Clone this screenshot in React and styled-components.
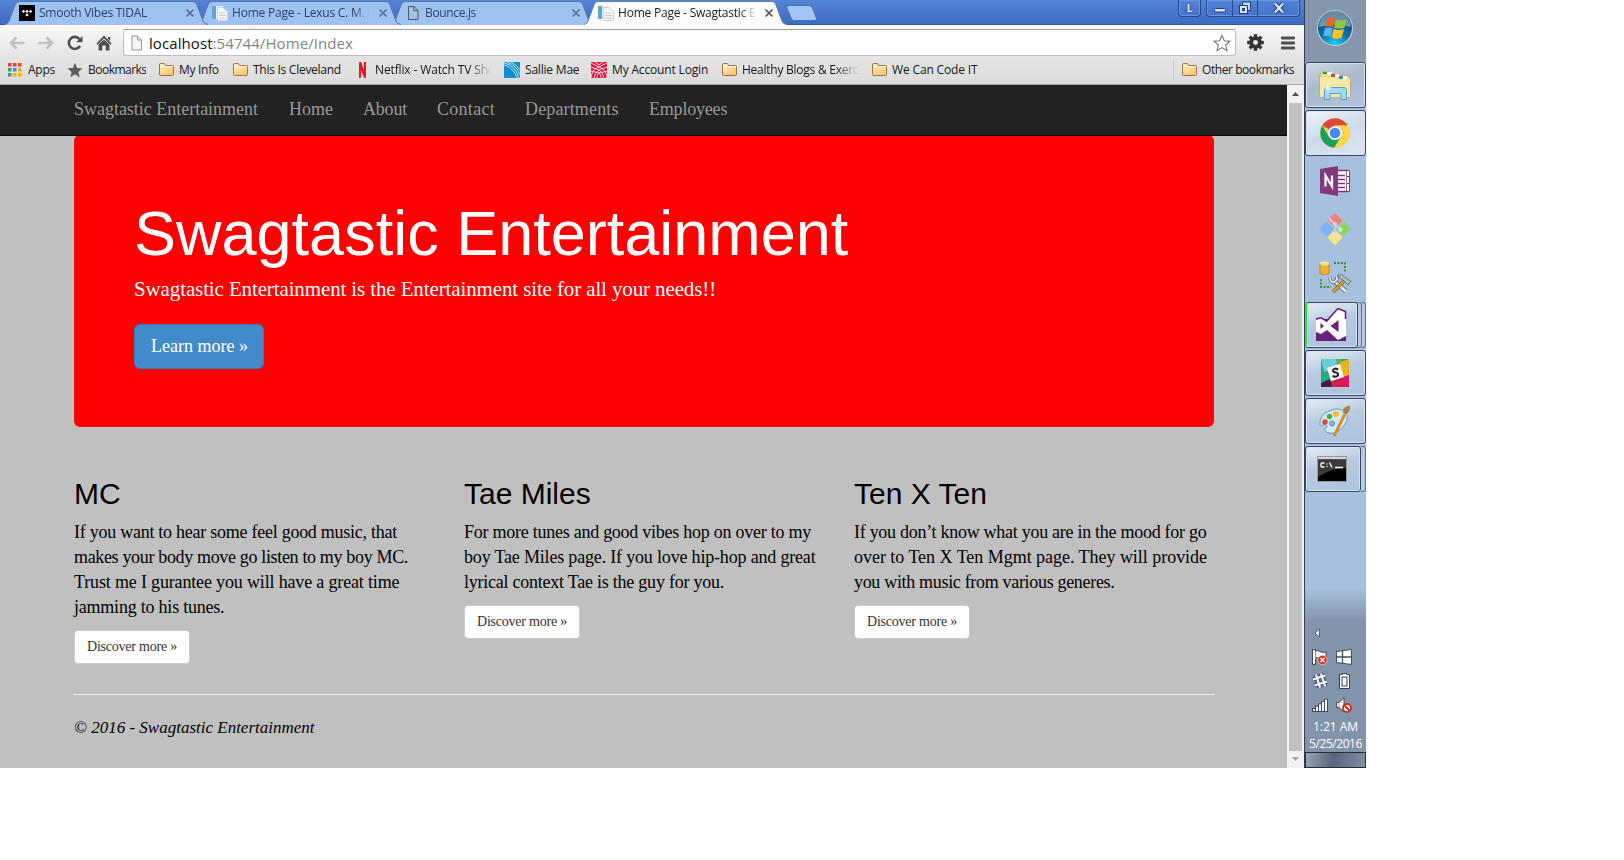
import React from 'react';
import styled, { createGlobalStyle, css } from 'styled-components';

const Global = createGlobalStyle`
  * { box-sizing: border-box; }
  body { margin: 0; background: #fff; }
  svg { display: block; }
`;

const ui = css`font-family: 'Open Sans', 'Noto Sans', sans-serif;`;
const serif = css`font-family: 'Liberation Serif', serif;`;

const Desktop = styled.div`
  display: flex;
  width: 1366px;
  height: 768px;
  overflow: hidden;
`;

const Browser = styled.div`
  display: flex;
  flex-direction: column;
  width: 1304px;
  height: 768px;
`;

/* ---------- tab strip ---------- */
const TabStrip = styled.div`
  display: flex;
  height: 25px;
  padding-left: 5px;
  background: linear-gradient(#5384d5, #3e6bc4);
  border-bottom: 1px solid #35589f;
  overflow: visible;
`;

const Tab = styled.div`
  position: relative;
  display: flex;
  align-items: center;
  flex: none;
  width: 203px;
  height: ${p => (p.$active ? 25 : 24)}px;
  margin-right: -10px;
  padding: ${p => (p.$active ? 1 : 2)}px 0 0 14px;
  z-index: ${p => (p.$active ? 5 : 4 - p.$order)};
`;

const TabShape = styled.svg`
  position: absolute;
  left: 0;
  top: 0;
  z-index: -1;
`;

const TabIcon = styled.span`
  flex: none;
  width: 16px;
  height: 16px;
  margin-right: 4px;
`;

const TabTitle = styled.span`
  ${ui}
  flex: none;
  width: 139px;
  font-size: 12px;
  line-height: 16px;
  white-space: nowrap;
  overflow: hidden;
  letter-spacing: ${p => p.$track}px;
  color: ${p => (p.$active ? '#1c1c1c' : '#2d4264')};
  mask-image: linear-gradient(90deg, #000 122px, transparent 138px);
`;

const TabClose = styled.svg`
  flex: none;
  margin-left: 7px;
`;

const NewTab = styled.svg`
  margin: 5px 0 0 8px;
`;

const WindowControls = styled.div`
  display: flex;
  gap: 5px;
  margin-left: auto;
  padding-right: 4px;
  height: 17px;
`;

const ControlGroup = styled.div`
  display: flex;
  height: 17px;
  border: 1px solid #27468c;
  border-top: 0;
  border-radius: 0 0 4px 4px;
  box-shadow: inset 0 0 0 1px #6b97e2;
`;

const Control = styled.div`
  ${ui}
  display: flex;
  align-items: center;
  justify-content: center;
  width: ${p => p.$w}px;
  font-size: 10px;
  font-weight: 700;
  color: #e8eef9;
  text-shadow: 0 0 2px #14295e;
  & + & { border-left: 1px solid #27468c; }
`;

/* ---------- toolbar + bookmarks ---------- */
const Chrome = styled.div`
  height: 60px;
  background: linear-gradient(#fafafa, #e4e4e4 32px, #dcdcdc);
  border-bottom: 1px solid #a5a5a5;
`;

const Toolbar = styled.div`
  display: flex;
  align-items: center;
  height: 31px;
  padding: 4px 9px 0 8px;
`;

const NavButton = styled.span`
  flex: none;
  width: 18px;
  height: 18px;
  margin-right: ${p => p.$gap}px;
`;

const Omnibox = styled.div`
  display: flex;
  align-items: center;
  width: 1115px;
  height: 27px;
  padding: 0 4px 0 6px;
  background: #fff;
  border: 1px solid #bdbdbd;
  border-top-color: #9f9f9f;
  border-radius: 3px;
`;

const Url = styled.span`
  ${ui}
  flex: 1;
  margin-left: 6px;
  font-size: 15px;
  letter-spacing: 0.08px;
  color: #848484;
  b { font-weight: 400; color: #111; }
`;

const ToolIcon = styled.svg`
  flex: none;
  margin-left: ${p => p.$ml}px;
`;

const BookmarkBar = styled.div`
  display: flex;
  align-items: center;
  gap: 12px;
  height: 27px;
  padding: 0 6px 0 7px;
`;

const Bookmark = styled.div`
  display: flex;
  align-items: center;
  flex: none;
  gap: 5px;
`;

const BookmarkLabel = styled.span`
  ${ui}
  width: ${p => p.$w}px;
  font-size: 12px;
  line-height: 18px;
  letter-spacing: ${p => p.$track}px;
  white-space: nowrap;
  overflow: hidden;
  color: #161616;
  ${p => p.$fade && css`mask-image: linear-gradient(90deg, #000 80%, transparent);`}
`;

const BarDivider = styled.span`
  width: 1px;
  height: 20px;
  margin: 0 -5px 0 auto;
  background: #c2cbd2;
`;

/* ---------- web page ---------- */
const Viewport = styled.div`
  display: flex;
  flex: 1;
  min-height: 0;
`;

const Page = styled.div`
  ${serif}
  width: 1287px;
  background: #c0c0c0;
  color: #000;
`;

const Navbar = styled.nav`
  display: flex;
  gap: 30px;
  height: 51px;
  padding: 14px 74px 0;
  background: #222;
  border-bottom: 1px solid #080808;
`;

const NavLink = styled.a`
  width: ${p => p.$w}px;
  font-size: 18px;
  line-height: 20px;
  letter-spacing: ${p => p.$track}px;
  white-space: nowrap;
  color: #999;
`;

const Container = styled.main`
  width: 1140px;
  margin: 0 auto 0 74px;
`;

const Jumbotron = styled.section`
  height: 292px;
  margin-top: -1px;
  padding: 67px 60px 0;
  background: #f00;
  border-radius: 6px;
  color: #fff;
  clip-path: inset(1px 0 0 0);
`;

const HeroTitle = styled.h1`
  margin: 0;
  font: 400 63px/63px 'Liberation Sans', Arial, sans-serif;
`;

const Lead = styled.p`
  margin: 8px 0 19px;
  font-size: 21px;
  line-height: 32px;
  letter-spacing: -0.123px;
`;

const Button = styled.a`
  display: inline-block;
  white-space: nowrap;
  ${p => p.$primary ? css`
    width: 130px;
    height: 45px;
    padding: 10px 16px;
    font-size: 18px;
    line-height: 23px;
    color: #fff;
    background: #428bca;
    border: 1px solid #357ebd;
    border-radius: 6px;
  ` : css`
    width: 116px;
    height: 34px;
    padding: 6px 12px;
    font-size: 14px;
    line-height: 19px;
    letter-spacing: -0.22px;
    color: #333;
    background: #fff;
    border: 1px solid #ccc;
    border-radius: 4px;
  `}
`;

const Columns = styled.div`
  display: grid;
  grid-template-columns: repeat(3, 390px);
  height: 267px;
  padding-top: 50px;
`;

const ArtistName = styled.h2`
  margin: 0 0 10px;
  font: 400 30px/33px 'Liberation Sans', Arial, sans-serif;
`;

const Blurb = styled.p`
  margin: 0 0 10px;
  font-size: 18px;
  line-height: 25px;
`;

const Line = styled.span`
  display: block;
  letter-spacing: ${p => p.$track}px;
  white-space: nowrap;
`;

const Footer = styled.footer`
  padding-top: 22px;
  border-top: 1px solid #eee;
  font-size: 17px;
  line-height: 22px;
  font-style: italic;
`;

const Scrollbar = styled.div`
  display: flex;
  flex-direction: column;
  align-items: center;
  width: 17px;
  background: #f1f1f1;
`;

const ScrollArrow = styled.svg`
  flex: none;
`;

const Thumb = styled.div`
  flex: 1;
  width: 13px;
  background: #c1c1c1;
`;

/* ---------- windows taskbar ---------- */
const Taskbar = styled.aside`
  display: flex;
  flex-direction: column;
  width: 62px;
  border-left: 1px solid #333f4d;
  background: linear-gradient(#8596ab 0 62px, #a6c0dd 62px 588px, #8294aa 622px);
`;

const StartButton = styled.div`
  display: flex;
  justify-content: center;
  height: 62px;
  padding: 9px 2px 0 0;
`;

const AppSlot = styled.div`
  display: flex;
  height: 48px;
`;

const AppButton = styled.div`
  display: flex;
  flex: 1;
  align-items: center;
  justify-content: center;
  height: 46px;
  padding-right: 2px;
  border: 1px solid transparent;
  ${p => p.$open && css`
    border-color: #39485a;
    border-radius: 3px;
    box-shadow: inset 0 0 0 1px #d5e2f0;
    background: ${p.$active
      ? 'linear-gradient(160deg, #f1f5fa, #ccdaea 50%, #dce7f3)'
      : p.$dim
        ? 'linear-gradient(160deg, #d2d8e0, #a9bacd 45%, #afc3de)'
        : 'linear-gradient(165deg, #e6edf5, #b6cae0 45%, #abc3df)'};
  `}
  ${p => p.$alert && css`border-left: 2px solid #23e83c; padding-right: 3px;`}
`;

const StackEdge = styled.div`
  width: ${p => p.$w}px;
  height: 46px;
  border: 1px solid #5b6f87;
  border-left: 0;
  border-radius: 0 3px 3px 0;
  background: #b5c9e0;
`;

const Tray = styled.div`
  display: grid;
  grid-template-columns: 16px 16px;
  column-gap: 8px;
  row-gap: 8px;
  margin: auto 0 0 7px;
`;

const TrayArrow = styled.span`
  grid-column: 1 / -1;
  height: 16px;
`;

const Clock = styled.div`
  ${ui}
  height: 39px;
  padding-top: 5px;
  text-align: center;
  font-size: 12px;
  line-height: 17px;
  color: #fff;
  span { display: block; }
  span + span { letter-spacing: -0.45px; }
`;

const ShowDesktop = styled.div`
  height: 16px;
  border: 1px solid #26303c;
  background: linear-gradient(100deg, #9aa7b6, #56657a 45%, #8090a4);
`;

/* ---------- icons ---------- */
const PageIcon = ({ stroke = '#555', fill = 'none' }) => (
  <svg width="16" height="16" viewBox="0 0 16 16">
    <path d="M3.5 1.5H9L13 5.5V14.5H3.5Z" fill={fill} stroke={stroke} />
    <path d="M8.8 1.5V5.7H13" fill="none" stroke={stroke} />
  </svg>
);

const SiteIcon = () => (
  <svg width="16" height="16" viewBox="0 0 16 16">
    <rect x="0" y="1" width="11" height="13" fill="#e9eef2" />
    <rect x="0" y="1" width="4" height="13" fill="#5aa7d6" />
    <path d="M5.500 2.500H11L15.500 7V15.500H5.500Z" fill="#f4f5f6" stroke="#cfd4d8" />
    <path d="M7 8H13M7 10.500H14M7 13H14" stroke="#c7ccd0" />
  </svg>
);

const TidalIcon = () => (
  <svg width="16" height="16" viewBox="0 0 16 16">
    <rect width="16" height="16" fill="#000" />
    <path d="M4.500 4.700L6.200 6.400L4.500 8.100L2.800 6.400ZM8 4.700L9.700 6.400L8 8.100L6.300 6.400ZM11.500 4.700L13.200 6.400L11.500 8.100L9.800 6.400ZM8 8.200L9.700 9.900L8 11.600L6.300 9.900Z" fill="#fff" />
  </svg>
);

const AppsIcon = () => {
  const colors = ['#ea4335', '#ea4335', '#ea4335', '#34a05c', '#4285f4', '#f4b400', '#34a05c', '#f4b400', '#f4b400'];
  return (
    <svg width="16" height="16" viewBox="0 0 16 16">
      {colors.map((c, i) => <rect key={i} x={1 + (i % 3) * 5} y={1 + Math.floor(i / 3) * 5} width="3.500" height="3.500" fill={c} />)}
    </svg>
  );
};

const STAR = 'M8 .8L10.100 5.900L15.500 6.300L11.400 9.900L12.700 15.200L8 12.300L3.300 15.200L4.600 9.900L.5 6.300L5.900 5.900Z';

const StarIcon = () => (
  <svg width="16" height="16" viewBox="0 0 16 16"><path d={STAR} fill="#5c5c5c" /></svg>
);

const FolderIcon = () => (
  <svg width="16" height="16" viewBox="0 0 16 16">
    <defs><linearGradient id="folder" x2="0.6" y2="1"><stop stopColor="#fff0c8" /><stop offset="1" stopColor="#fcc873" /></linearGradient></defs>
    <path d="M1.500 12.500V3Q1.500 1.500 2.500 1.500H6.500L7.500 3.500H14.500Q15.500 3.500 15.500 4.500V12.500Q15.500 13.500 14.500 13.500H2.500Q1.500 13.500 1.500 12.500Z" fill="url(#folder)" stroke="#a5703a" />
    <path d="M2.500 4.500H14.500" stroke="#fff6dc" />
  </svg>
);

const NetflixIcon = () => (
  <svg width="16" height="16" viewBox="0 0 16 16">
    <path d="M5 0H7.200L9.800 8V0H12V16L9.800 15.400L7.200 8V15.400L5 16Z" fill="#e21b22" />
  </svg>
);

const SallieIcon = () => (
  <svg width="16" height="16" viewBox="0 0 16 16">
    <rect width="16" height="16" fill="#0b8fd0" />
    <path d="M0 3Q9 5 13 16M0 1Q11 3 15 16M3 0Q13 4 16 13M7 0Q13 3 16 8" fill="none" stroke="#e8f6fd" strokeWidth=".8" />
  </svg>
);

const AccountIcon = () => (
  <svg width="16" height="16" viewBox="0 0 16 16">
    <rect width="16" height="16" fill="#e0103a" />
    <path d="M0 16Q1 7 8 5Q15 7 16 16M3 16Q4 10 8 8Q12 10 13 16M6 16Q6 12 8 11Q10 12 10 16M0 1L8 5L16 1M0 5L8 8L16 5M4 0L8 3L12 0M0 9L8 11L16 9" fill="none" stroke="#fff" strokeWidth=".8" />
  </svg>
);

const ArrowIcon = ({ flip }) => (
  <svg width="18" height="18" viewBox="0 0 18 18">
    <path d="M16.500 9H3M8.500 3.500L3 9L8.500 14.500" transform={flip ? 'matrix(-1 0 0 1 18 0)' : undefined} fill="none" stroke="#c0c0c0" strokeWidth="2.600" />
  </svg>
);

const ReloadIcon = () => (
  <svg width="18" height="18" viewBox="0 0 18 18">
    <path d="M14 12A6 6 0 1 1 13.400 5" fill="none" stroke="#4d4d4d" strokeWidth="2.600" />
    <path d="M16.500 2V8.300H10.200Z" fill="#4d4d4d" />
  </svg>
);

const HomeIcon = () => (
  <svg width="18" height="18" viewBox="0 0 18 18">
    <path d="M9 1.500L16.500 9.500L15.300 10.700L9 4.200L2.700 10.700L1.500 9.500ZM13 3H15.200V7L13 5ZM3.600 10.600L9 5.500L14.400 10.600V16.500H10.700V11.500H7.300V16.500H3.600Z" fill="#4d4d4d" />
  </svg>
);

const ChromeIcon = () => (
  <svg width="30" height="30" viewBox="0 0 30 30">
    <circle cx="15" cy="15" r="14.800" fill="#ffd54b" />
    <path d="M15 15L2.200 7.600A14.800 14.800 0 0 1 27.800 7.600H15Z" fill="#db4a3c" />
    <path d="M2.200 7.600A14.800 14.800 0 0 0 14.200 29.800L20.900 18.500L15 15L9 18.500Z" fill="#1a9f5c" />
    <path d="M27.800 7.600H15L21.400 18.700L14.500 29.800A14.800 14.800 0 0 0 27.800 7.600Z" fill="#ffd54b" />
    <circle cx="15" cy="15" r="6.900" fill="#f5f5f5" />
    <circle cx="15" cy="15" r="5.300" fill="#4688f1" />
  </svg>
);

const ExplorerIcon = () => (
  <svg width="34" height="32" viewBox="0 0 34 32">
    <path d="M2 5L4 3H11L13 5H17L18 6H24L25 7H32V28H2Z" fill="#f2d985" stroke="#b89b4e" strokeWidth=".7" />
    <path d="M5 3H9V5H5Z" fill="#1faa3c" /><path d="M9 3H14V6H9Z" fill="#fff" />
    <path d="M13 5H17V8H13Z" fill="#d94b32" /><path d="M17 5H21V8H17Z" fill="#fff" />
    <path d="M21 7H25V10H21Z" fill="#2d8ed8" /><path d="M25 7H29V10H25Z" fill="#fff" />
    <path d="M2 8H18L20 10H32V28H2Z" fill="#f8e7a2" />
    <path d="M6.500 30.500V21.500Q6.500 18.500 9 18.500H26Q28.500 18.500 28.500 21.500V30.500H23V24.500H12V30.500Z" fill="#a5daf3" stroke="#4ea3cd" />
    <path d="M10 14L10.800 18.200L15 19L10.800 19.800L10 24L9.200 19.800L5 19L9.200 18.200Z" fill="#fff" />
  </svg>
);

const StartOrb = () => (
  <svg width="38" height="38" viewBox="0 0 38 38">
    <defs><radialGradient id="orb" cx=".5" cy="1" r=".9"><stop stopColor="#21d9fb" /><stop offset=".45" stopColor="#0b76ad" /><stop offset="1" stopColor="#123f66" /></radialGradient></defs>
    <circle cx="19" cy="19" r="17.500" fill="url(#orb)" stroke="#b8cbd9" strokeWidth="1.200" />
    <path d="M3 18A16 16 0 0 1 35 18Q19 13 3 18Z" fill="#c5d5e2" opacity=".5" />
    <path d="M11.500 9.500Q15 7.500 19 10L17 18.500Q13.500 16.500 9.500 18Z" fill="#ee6426" />
    <path d="M20 10.500Q24 12.500 30.500 10.500L28.500 19Q23 20.500 18 18.800Z" fill="#8fc73e" />
    <path d="M9 19.200Q13 17.500 16.700 19.500L14.500 28Q11 26 7 27.500Z" fill="#55b5ec" />
    <path d="M17.700 20Q22.500 21.800 28 20.200L25.500 28.700Q20.500 31 15.500 28.500Z" fill="#fdc42c" />
  </svg>
);

const OneNoteIcon = () => (
  <svg width="32" height="30" viewBox="0 0 32 30">
    <path d="M17 4.500H28V25.500H17Z" fill="#fff" stroke="#80397b" strokeWidth="1.500" />
    <path d="M18 9.500H26M18 13.500H26M18 17.500H26M18 21.500H26" stroke="#80397b" strokeWidth="1.300" />
    <path d="M28 4.500H30.500V10.500H28M28 10.500H30.500V17.500H28M28 17.500H30.500V25.500H28" fill="#fff" stroke="#80397b" />
    <path d="M1 3L19 0V30L1 27Z" fill="#80397b" />
    <path d="M6.500 20.500V9.500L13 20.500V9.500" fill="none" stroke="#fff" strokeWidth="2.200" />
  </svg>
);

const GitIcon = () => (
  <svg width="32" height="32" viewBox="0 0 32 32">
    <path d="M16 0L23.500 7.500L16 15L8.500 7.500Z" fill="#f58080" />
    <path d="M7.500 8.500L15 16L7.500 23.500L0 16Z" fill="#80b3ff" />
    <path d="M24.500 8.500L32 16L24.500 23.500L17 16Z" fill="#8dd35f" />
    <path d="M16 17L23.500 24.500L16 32L8.500 24.500Z" fill="#ffe680" />
    <path d="M10 5.500L16 11.500L21 16.500M16 11V22" fill="none" stroke="#c3d2e2" strokeWidth="1.800" />
    <circle cx="16" cy="11" r="2.200" fill="#c9d6e4" /><circle cx="21.500" cy="16.500" r="2.200" fill="#d9e4e0" /><circle cx="16" cy="22" r="2.200" fill="#d9dfe0" />
  </svg>
);

const SqlIcon = () => (
  <svg width="32" height="34" viewBox="0 0 32 34">
    <path d="M15 3H26V13M2 19V27H12" fill="none" stroke="#2f8b31" strokeWidth="1.800" strokeDasharray="2 1.500" />
    <path d="M1 3.500V13.500Q5.500 16 10 13.500V3.500Z" fill="#e9b52e" stroke="#a9781a" strokeWidth=".7" />
    <ellipse cx="5.500" cy="3.500" rx="4.500" ry="2" fill="#fbe396" />
    <path d="M14 20L27 31.500" stroke="#5f6b78" strokeWidth="4.600" /><path d="M14 20L27 31.500" stroke="#e6eaee" strokeWidth="3" />
    <path d="M10.500 17L12 21.500L15 22.500L18.500 19L17 16" fill="none" stroke="#5f6b78" strokeWidth="3.400" />
    <path d="M10.500 17L12 21.500L15 22.500L18.500 19L17 16" fill="none" stroke="#dfe5ea" strokeWidth="1.800" />
    <path d="M14 32L26 20" stroke="#8c5c12" strokeWidth="3.600" /><path d="M14 32L26 20" stroke="#dba236" strokeWidth="2" />
    <path d="M18 16L22 14.500L29 19.500L32 21L29 25L26 22L23 19Z" fill="#b4bfca" stroke="#5f6b78" strokeWidth=".9" />
  </svg>
);

const VisualStudioIcon = () => (
  <svg width="32" height="34" viewBox="0 0 32 34">
    <path d="M1 11H31V33H1Z" fill="#68217a" />
    <path d="M1 12L6 10L12 14L23 1L31 4V28L23 32L12 22L6 26L1 24Z" fill="#fff" />
    <path d="M5.500 15V21L9 18ZM23.500 12V24L15.500 18Z" fill="#68217a" />
    <path d="M1 11L6 9.800L11.500 13L23 .5L30.500 3.500V11" fill="none" stroke="#68217a" strokeWidth="1.600" />
  </svg>
);

const SlackIcon = () => (
  <svg width="28" height="28" viewBox="0 0 28 28">
    <rect width="28" height="28" fill="#24a879" />
    <path d="M0 0H15L19 9L3 13Z" fill="#70cadb" /><path d="M0 6L9 28H0Z" fill="#25a97d" />
    <path d="M15 0H20L21 8L17 9Z" fill="#63b34a" />
    <path d="M19 3L28 0V19L22 21Z" fill="#e9b320" /><path d="M28 16V28H17L13 21Z" fill="#e01765" />
    <path d="M3 25L18 20L28 28H2Z" fill="#d61b50" /><path d="M0 24L9 20L11 28H0Z" fill="#402043" />
    <path d="M6 9L19 5L23 18L10 22Z" fill="#fff" />
    <path d="M17.300 10.500Q12.500 8.500 12 11.600Q12.500 13.300 15 13.500Q17.500 14 17 16.200Q15.500 18.700 11.500 16.900" fill="none" stroke="#2b2b2b" strokeWidth="2.200" />
  </svg>
);

const PaintIcon = () => (
  <svg width="34" height="32" viewBox="0 0 34 32">
    <path d="M2 20Q1 10 11 6Q22 1 28 8Q32 15 24 23Q16 31 8 27Q5 24 9 22Q9 18 5 20Q3 21 2 20Z" fill="#d2e9f8" stroke="#5d9fc8" />
    <circle cx="7" cy="17" r="2.700" fill="#e8442f" /><circle cx="11.500" cy="11.500" r="2.700" fill="#4fae3b" /><circle cx="18" cy="9" r="3" fill="#fbbc2c" /><circle cx="14" cy="18.500" r="2.500" fill="#86b9dd" stroke="#4e92c0" />
    <path d="M16 31L27 9" stroke="#e0882f" strokeWidth="3" />
    <path d="M25 8Q24 4 27 2L32 0Q33 4 31 7L28 10Z" fill="#a77d54" stroke="#e5cdae" strokeWidth=".5" />
  </svg>
);

const ConsoleIcon = () => (
  <svg width="30" height="26" viewBox="0 0 30 26">
    <rect x=".5" y=".5" width="29" height="25" fill="#000" stroke="#9a9a9a" />
    <rect x="1" y="1" width="28" height="2.500" fill="#d5d5d5" />
    <path d="M1 3.500H29V12Q14 12 1 21Z" fill="#3b3b3b" />
    <path d="M7.500 7H5Q4 7 4 8V10Q4 11 5 11H7.500M10 7.500V8.500M10 10V11M12.500 6.500L15 11.500M18 11.500H26" fill="none" stroke="#fff" strokeWidth="1.300" />
  </svg>
);

const FlagIcon = () => (
  <svg width="16" height="16" viewBox="0 0 16 16">
    <path d="M.5 .5H3.500V2Q6 1 8 2.500Q10 4 14 3V9Q10 11 8 9Q5.500 8 3.500 9V15.500H.5Z" fill="#fff" stroke="#3c4a5c" />
    <path d="M3.500 2V10" stroke="#8392a5" /><circle cx="10.500" cy="11" r="4.700" fill="#dd3328" stroke="#fff" strokeWidth=".5" />
    <path d="M8.500 9L12.500 13M12.500 9L8.500 13" stroke="#fff" strokeWidth="1.400" />
  </svg>
);

const WindowsIcon = () => (
  <svg width="16" height="16" viewBox="0 0 16 16">
    <path d="M.5 2.500L15.500 .5V15.500L.5 13.500Z" fill="#fff" stroke="#3f4e60" /><path d="M6.500 2V14.500M.5 8H15.500" stroke="#3f4e60" strokeWidth="1.300" />
  </svg>
);

const HashIcon = () => (
  <svg width="16" height="16" viewBox="0 0 16 16">
    <g fill="none"><path d="M4 1.500L8 14.500M9 .5L13 13.500M1 6.500L13 2.500M2.500 12.500L15 8.500" stroke="#38475a" strokeWidth="4" />
      <path d="M4 1.500L8 14.500M9 .5L13 13.500M1 6.500L13 2.500M2.500 12.500L15 8.500" stroke="#fff" strokeWidth="2.200" /></g>
  </svg>
);

const BatteryIcon = () => (
  <svg width="16" height="16" viewBox="0 0 16 16">
    <path d="M6.500 .5H10.500V1.500H13.500V15.500H3.500V1.500H6.500Z" fill="#fff" stroke="#34435a" /><rect x="6" y="4" width="5" height="9" fill="#f3f5f8" stroke="#34435a" />
  </svg>
);

const SignalIcon = () => (
  <svg width="16" height="16" viewBox="0 0 16 16">
    {[0, 1, 2, 3, 4].map(i => <rect key={i} x={.5 + i * 3} y={11.500 - i * 2.300} width="3" height={3 + i * 2.300} fill="#fff" stroke="#3c4b5d" />)}
  </svg>
);

const SpeakerIcon = () => (
  <svg width="16" height="16" viewBox="0 0 16 16">
    <path d="M.5 5.500H3L8 .8V15L3 10.500H.5Z" fill="#fff" stroke="#3c4b5d" /><path d="M3 5.500V10.500" stroke="#8795a7" />
    <circle cx="11" cy="11" r="4" fill="#fff" stroke="#d8261c" strokeWidth="1.800" /><path d="M8 8L14 14" stroke="#d8261c" strokeWidth="1.800" />
  </svg>
);

/* ---------- data ---------- */
const tabs = [
  { title: 'Smooth Vibes TIDAL', track: -0.25, icon: <TidalIcon /> },
  { title: 'Home Page - Lexus C. M. M', track: -0.22, icon: <SiteIcon /> },
  { title: 'Bounce.js', track: -0.35, icon: <PageIcon /> },
  { title: 'Home Page - Swagtastic E', track: -0.22, icon: <SiteIcon />, active: true },
];

const bookmarks = [
  { label: 'Apps', w: 27, track: -0.25, icon: <AppsIcon /> },
  { label: 'Bookmarks', w: 58, track: -0.52, icon: <StarIcon /> },
  { label: 'My Info', w: 41, track: -0.3, icon: <FolderIcon /> },
  { label: 'This Is Cleveland', w: 89, track: -0.27, icon: <FolderIcon /> },
  { label: 'Netflix - Watch TV Sho', w: 117, track: -0.13, icon: <NetflixIcon />, fade: true },
  { label: 'Sallie Mae', w: 54, track: -0.2, icon: <SallieIcon /> },
  { label: 'My Account Login', w: 97, track: -0.16, icon: <AccountIcon /> },
  { label: 'Healthy Blogs & Exerc', w: 117, track: -0.25, icon: <FolderIcon />, fade: true },
  { label: 'We Can Code IT', w: 88, track: -0.15, icon: <FolderIcon /> },
];

const links = [
  ['Swagtastic Entertainment', 185, -0.02], ['Home', 44, 0], ['About', 44, -0.2],
  ['Contact', 58, 0.28], ['Departments', 94, 0.15], ['Employees', 78, -0.2],
];

const artists = [
  { name: 'MC', lines: [
    ['If you want to hear some feel good music, that', -0.259],
    ['makes your body move go listen to my boy MC.', -0.341],
    ['Trust me I gurantee you will have a great time', -0.16],
    ['jamming to his tunes.', -0.22]] },
  { name: 'Tae Miles', lines: [
    ['For more tunes and good vibes hop on over to my', -0.255],
    ['boy Tae Miles page. If you love hip-hop and great', -0.18],
    ['lyrical context Tae is the guy for you.', -0.24]] },
  { name: 'Ten X Ten', lines: [
    ['If you don’t know what you are in the mood for go', -0.28],
    ['over to Ten X Ten Mgmt page. They will provide', -0.031],
    ['you with music from various generes.', -0.32]] },
];

const apps = [
  { icon: <ExplorerIcon />, open: true, dim: true },
  { icon: <ChromeIcon />, open: true, active: true },
  { icon: <OneNoteIcon /> },
  { icon: <GitIcon /> },
  { icon: <SqlIcon /> },
  { icon: <VisualStudioIcon />, open: true, alert: true, edges: [4, 4] },
  { icon: <SlackIcon />, open: true },
  { icon: <PaintIcon />, open: true },
  { icon: <ConsoleIcon />, open: true, edges: [5] },
];

export default function App() {
  return (
    <>
      <Global />
      <Desktop>
        <Browser>
          <TabStrip>
            {tabs.map((t, i) => (
              <Tab key={i} $active={t.active} $order={i}>
                <TabShape width="203" height="25" viewBox="0 0 203 25">
                  <path d="M0 24.500Q3 24 4 21L10 5Q11 1.500 14 1.500H188Q191 1.500 192 5L198 21Q199 24 203 24.500V25H0Z" fill={t.active ? '#fbfbfb' : '#9ec2f2'} />
                  <path d="M0 24.500Q3 24 4 21L10 5Q11 1.500 14 1.500H188Q191 1.500 192 5L198 21Q199 24 203 24.500" fill="none" stroke={t.active ? '#6b7c9a' : '#5675a8'} />
                </TabShape>
                <TabIcon>{t.icon}</TabIcon>
                <TabTitle $active={t.active} $track={t.track}>{t.title}</TabTitle>
                <TabClose width="10" height="10" viewBox="0 0 10 10">
                  <path d="M1.500 1.500L8.500 8.500M8.500 1.500L1.500 8.500" stroke={t.active ? '#555' : '#586f93'} strokeWidth="1.700" />
                </TabClose>
              </Tab>
            ))}
            <NewTab width="34" height="16" viewBox="0 0 34 16">
              <path d="M3 .5H24Q26.500 .5 27.500 3L31.500 13.500Q32 15.500 30 15.500H9.500Q7 15.500 6 13L1.500 2Q1.500 .5 3 .5Z" fill="#a3c5f3" stroke="#4b70b3" />
            </NewTab>
            <WindowControls>
              <ControlGroup><Control $w={21}>L</Control></ControlGroup>
              <ControlGroup>
                <Control $w={25}><svg width="14" height="12" viewBox="0 0 14 12"><rect x="1.500" y="6.500" width="11" height="3.500" rx="1" fill="#d8e4f8" stroke="#213b78" /></svg></Control>
                <Control $w={25}><svg width="14" height="14" viewBox="0 0 14 14"><path d="M4.500 1H12.500V9.500H4.500Z" fill="#c8d8f4" stroke="#213b78" /><path d="M1.500 4.500H9.500V12.500H1.500Z" fill="#dce7fa" stroke="#213b78" /><rect x="4.500" y="7.500" width="2" height="2" fill="#4f7cd0" stroke="#213b78" /></svg></Control>
                <Control $w={42}><svg width="14" height="12" viewBox="0 0 14 12"><path d="M3 1.500L11 10.500M11 1.500L3 10.500" stroke="#213b78" strokeWidth="4.200" /><path d="M3 1.500L11 10.500M11 1.500L3 10.500" stroke="#dce7fa" strokeWidth="2.400" /></svg></Control>
              </ControlGroup>
            </WindowControls>
          </TabStrip>

          <Chrome>
            <Toolbar>
              <NavButton $gap={11}><ArrowIcon /></NavButton>
              <NavButton $gap={11}><ArrowIcon flip /></NavButton>
              <NavButton $gap={11}><ReloadIcon /></NavButton>
              <NavButton $gap={10}><HomeIcon /></NavButton>
              <Omnibox>
                <svg width="13" height="16" viewBox="2 0 12 16"><path d="M3.500 1H9L13 5V15H3.500Z" fill="#f7f7f7" stroke="#929292" /><path d="M9 1V5H13" fill="none" stroke="#929292" /></svg>
                <Url><b>localhost</b>:54744/Home/Index</Url>
                <ToolIcon $ml={0} width="18" height="18" viewBox="-.5 -.5 17 17"><path d={STAR} fill="#fff" stroke="#747474" /></ToolIcon>
              </Omnibox>
              <ToolIcon $ml={11} width="17" height="17" viewBox="-8.5 -8.5 17 17">
                {[0, 45, 90, 135].map(a => <rect key={a} x="-1.700" y="-8.300" width="3.400" height="16.600" transform={`rotate(${a})`} fill="#333" />)}
                <circle r="6.200" fill="#333" /><circle r="2.400" fill="#efefef" />
              </ToolIcon>
              <ToolIcon $ml={17} width="14" height="14" viewBox="0 0 14 14"><path d="M1 2H13M1 7H13M1 12H13" stroke="#505050" strokeWidth="2.800" strokeLinecap="round" /></ToolIcon>
            </Toolbar>
            <BookmarkBar>
              {bookmarks.map(b => (
                <Bookmark key={b.label}>{b.icon}<BookmarkLabel $w={b.w} $track={b.track} $fade={b.fade}>{b.label}</BookmarkLabel></Bookmark>
              ))}
              <BarDivider />
              <Bookmark><FolderIcon /><BookmarkLabel $w={96} $track={-0.43}>Other bookmarks</BookmarkLabel></Bookmark>
            </BookmarkBar>
          </Chrome>

          <Viewport>
            <Page>
              <Navbar>{links.map(([text, w, track]) => <NavLink key={text} $w={w} $track={track}>{text}</NavLink>)}</Navbar>
              <Container>
                <Jumbotron>
                  <HeroTitle>Swagtastic Entertainment</HeroTitle>
                  <Lead>Swagtastic Entertainment is the Entertainment site for all your needs!!</Lead>
                  <Button $primary>Learn more »</Button>
                </Jumbotron>
                <Columns>
                  {artists.map(a => (
                    <article key={a.name}>
                      <ArtistName>{a.name}</ArtistName>
                      <Blurb>{a.lines.map(([text, track]) => <Line key={text} $track={track}>{text}</Line>)}</Blurb>
                      <Button>Discover more »</Button>
                    </article>
                  ))}
                </Columns>
                <Footer>© 2016 - Swagtastic Entertainment</Footer>
              </Container>
            </Page>
            <Scrollbar>
              <ScrollArrow width="17" height="18" viewBox="0 0 17 18"><path d="M5 11L8.500 7L12 11Z" fill="#505050" /></ScrollArrow>
              <Thumb />
              <ScrollArrow width="17" height="17" viewBox="0 0 17 17"><path d="M5 6L8.500 10L12 6Z" fill="#a3a3a3" /></ScrollArrow>
            </Scrollbar>
          </Viewport>
        </Browser>

        <Taskbar>
          <StartButton><StartOrb /></StartButton>
          {apps.map((a, i) => (
            <AppSlot key={i}>
              <AppButton $open={a.open} $active={a.active} $dim={a.dim} $alert={a.alert}>{a.icon}</AppButton>
              {(a.edges || []).map((w, k) => <StackEdge key={k} $w={w} />)}
            </AppSlot>
          ))}
          <Tray>
            <TrayArrow><svg width="16" height="16" viewBox="0 0 16 16"><path d="M7.500 4V12L3 8Z" fill="#fff" stroke="#4a596b" /></svg></TrayArrow>
            <FlagIcon /><WindowsIcon /><HashIcon /><BatteryIcon /><SignalIcon /><SpeakerIcon />
          </Tray>
          <Clock><span>1:21 AM</span><span>5/25/2016</span></Clock>
          <ShowDesktop />
        </Taskbar>
      </Desktop>
    </>
  );
}
